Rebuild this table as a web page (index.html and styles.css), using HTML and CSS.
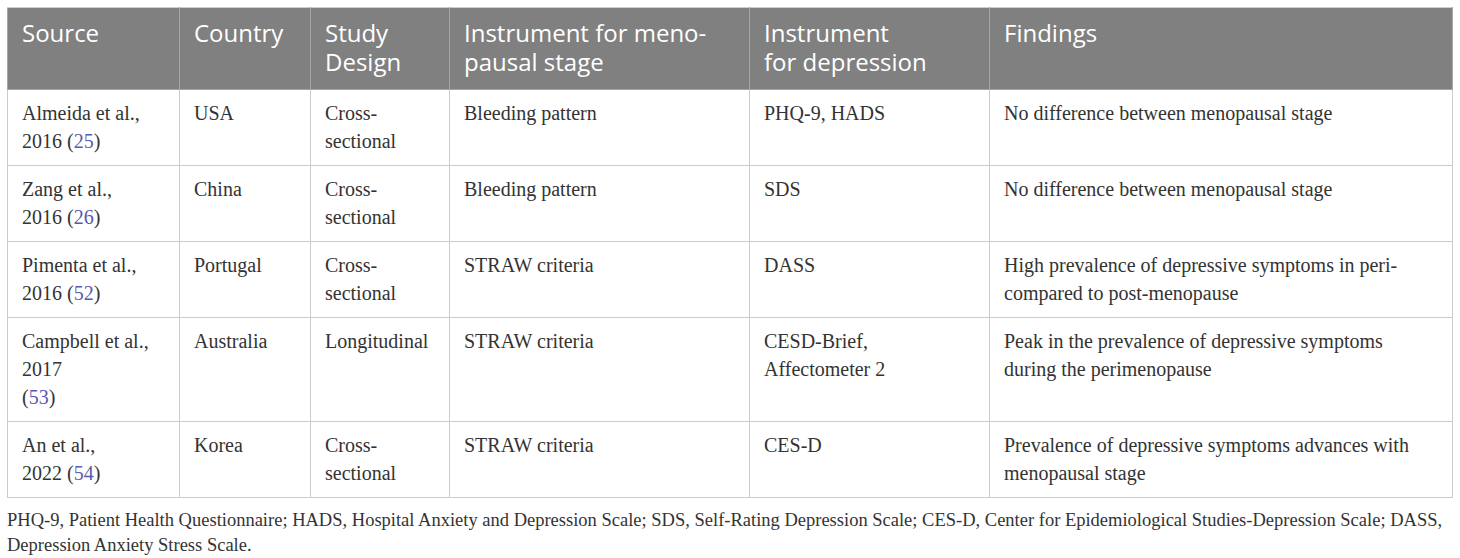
FILE: index.html
```html
<!DOCTYPE html>
<html lang="en">

<head>
    <meta charset="UTF-8">
    <meta name="viewport" content="width=device-width, initial-scale=1.0">
    <title>Studies of depression across menopausal stages</title>
    <link rel="stylesheet" href="styles.css">
</head>

<body>
    <div class="table-wrap">
        <table class="study-table">
            <colgroup>
                <col class="col-source">
                <col class="col-country">
                <col class="col-design">
                <col class="col-stage">
                <col class="col-depression">
                <col class="col-findings">
            </colgroup>
            <thead>
                <tr>
                    <th>Source</th>
                    <th>Country</th>
                    <th>Study<br>Design</th>
                    <th>Instrument for meno-<br>pausal stage</th>
                    <th>Instrument<br>for depression</th>
                    <th>Findings</th>
                </tr>
            </thead>
            <tbody>
                <tr>
                    <td>Almeida et al.,<br>2016 (<a href="#ref25">25</a>)</td>
                    <td>USA</td>
                    <td>Cross-<br>sectional</td>
                    <td>Bleeding pattern</td>
                    <td>PHQ-9, HADS</td>
                    <td>No difference between menopausal stage</td>
                </tr>
                <tr>
                    <td>Zang et al.,<br>2016 (<a href="#ref26">26</a>)</td>
                    <td>China</td>
                    <td>Cross-<br>sectional</td>
                    <td>Bleeding pattern</td>
                    <td>SDS</td>
                    <td>No difference between menopausal stage</td>
                </tr>
                <tr>
                    <td>Pimenta et al.,<br>2016 (<a href="#ref52">52</a>)</td>
                    <td>Portugal</td>
                    <td>Cross-<br>sectional</td>
                    <td>STRAW criteria</td>
                    <td>DASS</td>
                    <td>High prevalence of depressive symptoms in peri-<br>compared to post-menopause</td>
                </tr>
                <tr>
                    <td>Campbell et al.,<br>2017<br>(<a href="#ref53">53</a>)</td>
                    <td>Australia</td>
                    <td>Longitudinal</td>
                    <td>STRAW criteria</td>
                    <td>CESD-Brief,<br>Affectometer 2</td>
                    <td>Peak in the prevalence of depressive symptoms<br>during the perimenopause</td>
                </tr>
                <tr>
                    <td>An et al.,<br>2022 (<a href="#ref54">54</a>)</td>
                    <td>Korea</td>
                    <td>Cross-<br>sectional</td>
                    <td>STRAW criteria</td>
                    <td>CES-D</td>
                    <td>Prevalence of depressive symptoms advances with<br>menopausal stage</td>
                </tr>
            </tbody>
        </table>

        <p class="footnote">PHQ-9, Patient Health Questionnaire; HADS, Hospital Anxiety and Depression Scale; SDS, Self-Rating Depression Scale; CES-D, Center for Epidemiological Studies-Depression Scale; DASS, Depression Anxiety Stress Scale.</p>
    </div>
</body>

</html>
```

FILE: styles.css
```css
body {
    margin: 0;
    padding: 7px 8px 0 7px;
    background-color: #fff;
    font-family: "Liberation Serif", "Times New Roman", serif;
    color: #333;
}

.table-wrap {
    width: 1445px;
}

.study-table {
    width: 100%;
    table-layout: fixed;
    border-collapse: collapse;
}

.col-source { width: 172px; }
.col-country { width: 131px; }
.col-design { width: 139px; }
.col-stage { width: 300px; }
.col-depression { width: 240px; }
.col-findings { width: 463px; }

.study-table th {
    background-color: #808080;
    color: #fff;
    font-family: "Open Sans", "Noto Sans", sans-serif;
    font-weight: normal;
    font-size: 24px;
    line-height: 29px;
    text-align: left;
    vertical-align: top;
    padding: 10px 14px 13px 14px;
    border: 1px solid #a6a6a6;
    border-top-color: #cfcfcf;
}

.study-table td {
    font-size: 20px;
    line-height: 28px;
    vertical-align: top;
    padding: 9px 14px 10px 14px;
    border: 1px solid #cccccc;
}

.study-table a {
    color: #5a5aae;
    text-decoration: none;
}

.footnote {
    margin: 10px 0 0 0;
    font-size: 18.5px;
    line-height: 25px;
}
```
